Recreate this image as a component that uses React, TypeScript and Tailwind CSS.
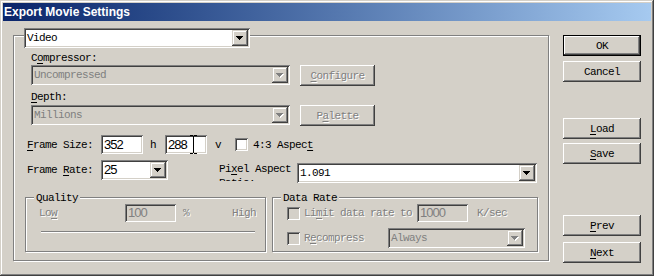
import React from "react";

const mono = "font-['Liberation_Mono',monospace] text-[11px] tracking-[-0.6px] leading-[12px]";
const sans = "font-['Liberation_Sans',Arial,sans-serif] text-[13px] tracking-[-1px] leading-[14px]";
const dim = "text-[#808080] [text-shadow:1px_1px_0_#ffffff]";
const sunken =
  "shadow-[inset_1px_1px_0_#808080,inset_-1px_-1px_0_#ffffff,inset_2px_2px_0_#404040,inset_-2px_-2px_0_#d4d0c8]";
const raised =
  "shadow-[inset_-1px_-1px_0_#404040,inset_1px_1px_0_#ffffff,inset_-2px_-2px_0_#808080]";
const arrowBtn =
  "shadow-[inset_-1px_-1px_0_#404040,inset_1px_1px_0_#d4d0c8,inset_-2px_-2px_0_#808080,inset_2px_2px_0_#ffffff]";
const etched = "border border-[#808080] shadow-[1px_1px_0_#ffffff,inset_1px_1px_0_#ffffff]";

function Arrow({ disabled }: { disabled?: boolean }) {
  const d = "M0 0h7v1H0z M1 1h5v1H1z M2 2h3v1H2z M3 3h1v1H3z";
  return (
    <svg width="8" height="5" viewBox="0 0 8 5">
      {disabled && <path d={d} fill="#ffffff" transform="translate(1 1)" />}
      <path d={d} fill={disabled ? "#808080" : "#000000"} />
    </svg>
  );
}

function Combo({
  value,
  className,
  disabled,
  numeric,
}: {
  value: string;
  className: string;
  disabled?: boolean;
  numeric?: boolean;
}) {
  return (
    <div
      className={`h-[20px] flex items-center shrink-0 ${sunken} ${
        disabled ? "bg-[#d4d0c8]" : "bg-white"
      } ${className}`}
    >
      <span
        className={`flex-1 pl-[3px] whitespace-nowrap overflow-hidden ${numeric ? sans : mono} ${
          disabled ? "text-[#808080]" : "text-black"
        }`}
      >
        {value}
      </span>
      <div
        className={`w-[16px] h-[16px] mr-[2px] shrink-0 flex items-center justify-center bg-[#d4d0c8] ${arrowBtn}`}
      >
        <Arrow disabled={disabled} />
      </div>
    </div>
  );
}

function Field({
  value,
  className,
  disabled,
  children,
}: {
  value: string;
  className: string;
  disabled?: boolean;
  children?: React.ReactNode;
}) {
  return (
    <div
      className={`relative flex items-center shrink-0 pl-[3px] ${sunken} ${sans} ${
        disabled ? "bg-[#d4d0c8] text-[#808080]" : "bg-white text-black"
      } ${className}`}
    >
      {value}
      {children}
    </div>
  );
}

function Check({ disabled, className }: { disabled?: boolean; className?: string }) {
  return (
    <div
      className={`w-[13px] h-[13px] shrink-0 ${sunken} ${disabled ? "bg-[#d4d0c8]" : "bg-white"} ${
        className ?? ""
      }`}
    />
  );
}

function Button({
  children,
  className,
  disabled,
  isDefault,
}: {
  children: React.ReactNode;
  className?: string;
  disabled?: boolean;
  isDefault?: boolean;
}) {
  return (
    <div
      className={`h-[21px] shrink-0 flex ${isDefault ? "border border-black" : ""} ${className ?? ""}`}
    >
      <div
        className={`flex-1 flex items-center justify-center bg-[#d4d0c8] ${raised} ${mono} ${
          disabled ? dim : "text-black"
        }`}
      >
        <span>{children}</span>
      </div>
    </div>
  );
}

function U({ children }: { children: React.ReactNode }) {
  return <span className="underline underline-offset-[2px] decoration-1">{children}</span>;
}

function IBeam() {
  return (
    <svg className="absolute left-[25px] top-0" width="7" height="19" viewBox="0 0 7 19">
      <path
        d="M0 0h3v1H0z M4 0h3v1H4z M3 1h1v17H3z M0 18h3v1H0z M4 18h3v1H4z"
        fill="#000000"
      />
    </svg>
  );
}

export default function App() {
  return (
    <div
      className={`w-[654px] h-[276px] overflow-hidden bg-[#d4d0c8] p-[3px] flex flex-col shadow-[inset_-1px_-1px_0_#404040,inset_1px_1px_0_#d4d0c8,inset_-2px_-2px_0_#808080,inset_2px_2px_0_#ffffff]`}
    >
      {/* title bar */}
      <div className="h-[18px] shrink-0 bg-linear-to-r from-[#0a246a] to-[#a6caf0] flex items-center pl-[1px]">
        <span className="text-white font-bold text-[12px] leading-[18px] font-['Liberation_Sans',Arial,sans-serif]">
          Export Movie Settings
        </span>
      </div>

      <div className="flex">
        {/* main settings box */}
        <div className={`ml-[10px] mt-[14px] w-[536px] h-[226px] shrink-0 flex flex-col ${etched}`}>
          <Combo value="Video" className="-mt-[8px] ml-[10px] w-[226px]" />

          <div className={`mt-[4px] ml-[17px] text-black ${mono}`}>
            C<U>o</U>mpressor:
          </div>
          <div className="mt-[1px] ml-[17px] flex gap-[10px]">
            <Combo value="Uncompressed" className="w-[259px]" disabled />
            <Button className="w-[75px] h-[20px]" disabled>
              <U>C</U>onfigure
            </Button>
          </div>

          <div className={`mt-[5px] ml-[17px] text-black ${mono}`}>
            <U>D</U>epth:
          </div>
          <div className="mt-[2px] ml-[17px] flex gap-[10px]">
            <Combo value="Millions" className="w-[259px]" disabled />
            <Button className="w-[75px] h-[20px]" disabled>
              P<U>a</U>lette
            </Button>
          </div>

          {/* frame size */}
          <div className={`mt-[9px] ml-[13px] h-[19px] flex items-center text-black ${mono}`}>
            <span>
              <U>F</U>rame Size:
            </span>
            <Field value="352" className="ml-[8px] w-[42px] h-[19px]" />
            <span className="ml-[7px]">h</span>
            <Field value="288" className="ml-[9px] w-[42px] h-[19px]">
              <IBeam />
            </Field>
            <span className="ml-[8px]">v</span>
            <Check className="ml-[14px]" />
            <span className="ml-[5px]">
              4:3 Aspec<U>t</U>
            </span>
          </div>

          {/* frame rate / pixel aspect */}
          <div className={`mt-[6px] ml-[13px] flex items-start text-black ${mono}`}>
            <div className="h-[20px] flex items-center">
              <span>
                Frame <U>R</U>ate:
              </span>
            </div>
            <Combo value="25" className="ml-[8px] w-[67px]" numeric />
            <div className="ml-[51px] mt-[2px] w-[76px] h-[19px] overflow-hidden leading-[14px]">
              Pi<U>x</U>el Aspect Ratio:
            </div>
            <Combo value="1.091" className="ml-[2px] mt-[3px] w-[240px]" />
          </div>

          {/* quality + data rate */}
          <div className="mt-[14px] ml-[11px] flex">
            <div className={`w-[241px] h-[55px] shrink-0 flex flex-col ${etched}`}>
              <div className={`-mt-[6px] ml-[8px] px-[2px] w-fit bg-[#d4d0c8] text-black ${mono}`}>
                Quality
              </div>
              <div className={`h-[18px] ml-[13px] flex items-center ${mono}`}>
                <span className={dim}>
                  Lo<U>w</U>
                </span>
                <Field value="100" className="ml-[68px] w-[51px] h-[18px]" disabled />
                <span className={`ml-[7px] ${dim}`}>%</span>
                <span className={`ml-[43px] ${dim}`}>High</span>
              </div>
              <div className="mt-[9px] ml-[15px] w-[214px] h-[2px] border-t border-b border-t-[#808080] border-b-white" />
            </div>

            <div className={`ml-[6px] w-[266px] h-[55px] shrink-0 flex flex-col ${etched}`}>
              <div className={`-mt-[6px] ml-[8px] px-[2px] w-fit bg-[#d4d0c8] text-black ${mono}`}>
                Data Rate
              </div>
              <div className={`h-[18px] ml-[14px] flex items-center ${mono}`}>
                <Check disabled />
                <span className={`ml-[4px] ${dim}`}>
                  Li<U>m</U>it data rate to
                </span>
                <Field value="1000" className="ml-[5px] w-[51px] h-[18px]" disabled />
                <span className={`ml-[9px] ${dim}`}>K/sec</span>
              </div>
              <div className={`mt-[6px] h-[20px] ml-[14px] flex items-center ${mono}`}>
                <Check disabled />
                <span className={`ml-[4px] ${dim}`}>
                  R<U>e</U>compress
                </span>
                <Combo value="Always" className="ml-[24px] w-[137px]" disabled />
              </div>
            </div>
          </div>
        </div>

        {/* right button column */}
        <div className="ml-[14px] mt-[14px] w-[78px] flex flex-col">
          <Button isDefault>OK</Button>
          <Button className="mt-[5px]">Cancel</Button>
          <Button className="mt-[36px]">
            <U>L</U>oad
          </Button>
          <Button className="mt-[4px]">
            <U>S</U>ave
          </Button>
          <Button className="mt-[51px]">
            <U>P</U>rev
          </Button>
          <Button className="mt-[6px]">
            <U>N</U>ext
          </Button>
        </div>
      </div>
    </div>
  );
}
